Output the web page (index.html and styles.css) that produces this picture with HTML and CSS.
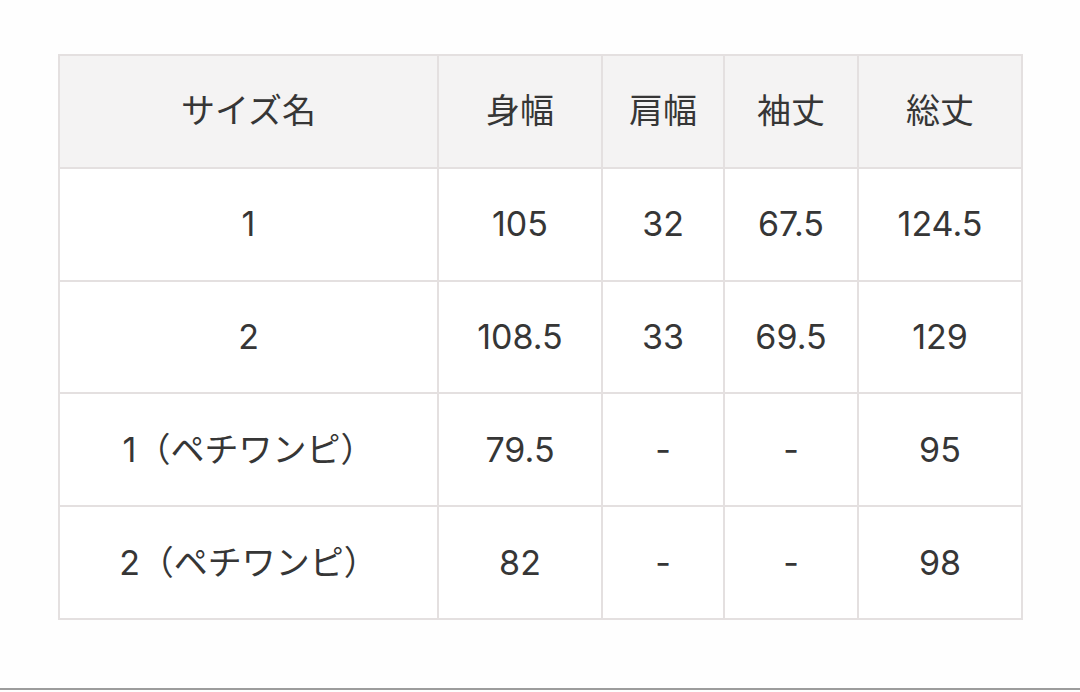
FILE: index.html
```html
<!DOCTYPE html>
<html lang="ja">
<head>
<meta charset="utf-8">
<link rel="stylesheet" href="styles.css">
</head>
<body>
<div class="page">
  <table class="size-table">
    <colgroup>
      <col class="c1"><col class="c2"><col class="c3"><col class="c4"><col class="c5">
    </colgroup>
    <thead>
      <tr><th>サイズ名</th><th>身幅</th><th>肩幅</th><th>袖丈</th><th>総丈</th></tr>
    </thead>
    <tbody>
      <tr><td>1</td><td>105</td><td>32</td><td>67.5</td><td>124.5</td></tr>
      <tr><td>2</td><td>108.5</td><td>33</td><td>69.5</td><td>129</td></tr>
      <tr><td>1（ペチワンピ）</td><td>79.5</td><td>-</td><td>-</td><td>95</td></tr>
      <tr><td>2（ペチワンピ）</td><td>82</td><td>-</td><td>-</td><td>98</td></tr>
    </tbody>
  </table>
</div>
</body>
</html>
```

FILE: styles.css
```css
html, body {
  margin: 0;
  padding: 0;
  background: #fefefe;
}
body {
  font-family: Inter, "Noto Sans CJK JP", "Noto Sans", sans-serif;
  color: #363636;
}
.page {
  height: 690px;
  border-bottom: 2px solid #9c9c9c;
  padding: 54px 0 0 58px;
  box-sizing: border-box;
  overflow: hidden;
}
.size-table {
  border-collapse: collapse;
  table-layout: fixed;
  width: 963px;
  border: 2px solid #e4e0e0;
}
.c1 { width: 379px; }
.c2 { width: 164px; }
.c3 { width: 122px; }
.c4 { width: 134px; }
.c5 { width: 164px; }
.size-table th,
.size-table td {
  border: 2px solid #e4e0e0;
  height: 110.8px;
  padding: 0;
  text-align: center;
  vertical-align: middle;
  font-size: 34px;
  font-weight: 400;
  line-height: 1;
}
.size-table th {
  background: #f4f3f3;
}
.size-table td {
  background: #fff;
}
```
